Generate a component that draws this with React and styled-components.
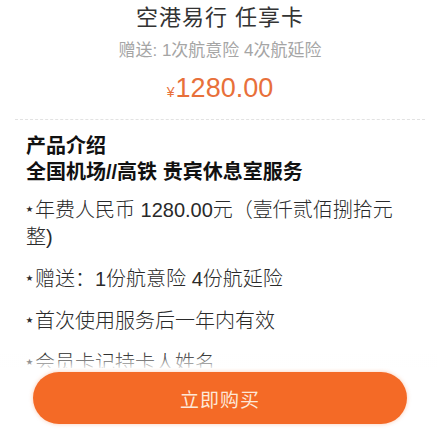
import styled, { createGlobalStyle } from "styled-components";

const GlobalStyle = createGlobalStyle`
  body {
    margin: 0;
    background: #fff;
    font-family: "Liberation Sans", "Noto Sans CJK SC", sans-serif;
  }
`;

const items = [
  "年费人民币 1280.00元（壹仟贰佰捌拾元整)",
  "赠送：1份航意险 4份航延险",
  "首次使用服务后一年内有效",
  "会员卡记持卡人姓名",
];

const App = () => {
  return (
    <Page>
      <GlobalStyle />
      <Header>
        <Title>空港易行 任享卡</Title>
        <Gift>赠送: 1次航意险 4次航延险</Gift>
        <Price>
          <Yen>¥</Yen>1280.00
        </Price>
      </Header>
      <Divider />
      <Intro>
        <Heading>产品介绍</Heading>
        <Heading>全国机场//高铁 贵宾休息室服务</Heading>
        <List>
          {items.map((t) => (
            <Item key={t}>
              <Star>★</Star>
              {t}
            </Item>
          ))}
        </List>
      </Intro>
      <BottomBar>
        <BuyButton>立即购买</BuyButton>
      </BottomBar>
    </Page>
  );
};

const Page = styled.div`
  height: 432px;
  overflow: hidden;
`;

const Header = styled.div`
  display: flex;
  flex-direction: column;
  align-items: center;
  padding-top: 4px;
  padding-left: 3px;
`;

const Title = styled.h1`
  margin: 0;
  font-size: 22px;
  line-height: 28px;
  font-weight: 400;
  color: #333;
  letter-spacing: 1px;
`;

const Gift = styled.div`
  margin-top: 7px;
  font-size: 17px;
  line-height: 24px;
  color: #a5a5a5;
`;

const Price = styled.div`
  margin-top: 8px;
  font-size: 27px;
  line-height: 34px;
  color: #e8703a;
`;

const Yen = styled.span`
  font-size: 14px;
  margin-right: 1px;
`;

const Divider = styled.div`
  margin: 10px 12px 0 15px;
  border-top: 1px dashed #e2e2e2;
`;

const Intro = styled.div`
  padding: 13px 30px 0 26px;
`;

const Heading = styled.h2`
  margin: 0;
  font-size: 20px;
  line-height: 26px;
  font-weight: 700;
  color: #111;
`;

const List = styled.div`
  margin-top: 12px;
  display: flex;
  flex-direction: column;
  gap: 15px;
`;

const Item = styled.p`
  margin: 0;
  font-size: 20px;
  line-height: 27px;
  font-weight: 300;
  color: #2a2a2a;
`;

const Star = styled.span`
  display: inline-block;
  font-size: 7px;
  line-height: 7px;
  vertical-align: 6px;
  margin-right: 2px;
`;

const BottomBar = styled.div`
  position: fixed;
  left: 0;
  right: 0;
  bottom: 0;
  height: 64px;
  box-sizing: border-box;
  padding: 4px 30px 8px 33px;
  background: #fff;

  &::before {
    content: "";
    position: absolute;
    left: 0;
    right: 0;
    top: -14px;
    height: 14px;
    background: linear-gradient(rgba(255, 255, 255, 0), rgba(255, 255, 255, 0.85));
  }
`;

const BuyButton = styled.button`
  width: 100%;
  height: 52px;
  border: none;
  border-radius: 26px;
  background: #f46a26;
  color: #fde8d8;
  font-family: "Noto Sans CJK SC", sans-serif;
  font-size: 19px;
  letter-spacing: 1px;
  box-shadow: 0 0 4px rgba(244, 106, 38, 0.35);
  cursor: pointer;
`;

export default App;
